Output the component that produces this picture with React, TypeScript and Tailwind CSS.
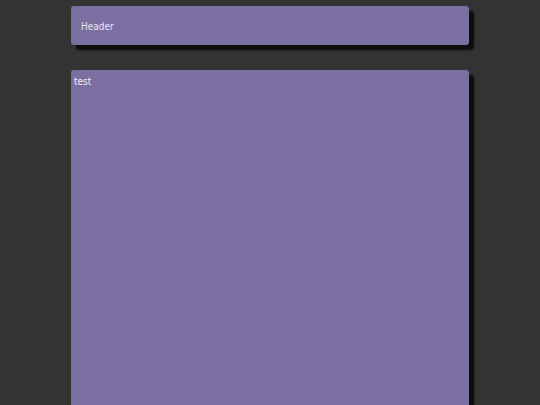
export default function App() {
  return (
    <div className="h-[405px] bg-[#333333] pt-[6px] overflow-hidden" style={{ fontFamily: '"DejaVu Sans Condensed", "DejaVu Sans", sans-serif' }}>
      <div className="mx-auto w-[398px]">
        <div className="h-[39px] rounded-[3px] bg-[#7b6fa1] px-[10px] pt-[1px] flex items-center text-[10px] text-[#e8e4f2] shadow-[5px_5px_2px_#0c0c0c]">
          Header
        </div>
        <div className="mt-[25px] h-[360px] rounded-[3px] bg-[#7b6fa1] px-[3px] pt-[4px] text-[10px] text-[#f0eef6] shadow-[5px_5px_2px_#0c0c0c]">
          test
        </div>
      </div>
    </div>
  );
}
